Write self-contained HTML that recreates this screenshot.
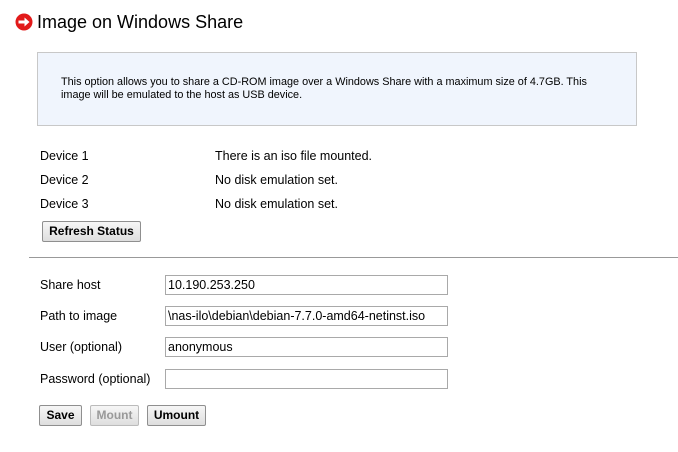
<!DOCTYPE html>
<html><head><style>
body{margin:0;width:678px;height:452px;background:#fff;font-family:"Liberation Sans",sans-serif;color:#000;position:relative;overflow:hidden}
.a{position:absolute;white-space:nowrap}
.t{font-size:12.5px;line-height:16px}
.in{position:absolute;left:165px;height:18px;border:1px solid #a9a9a9;background:#fff;font-size:12.5px;line-height:18px;padding-left:2px;width:279px}
.b{position:absolute;height:19px;border:1px solid #8f8f8f;background:linear-gradient(#f6f6f6,#dedede);font-size:12px;font-weight:bold;line-height:19px;text-align:center;border-radius:2px}
</style></head><body>
<svg class="a" style="left:15px;top:13px" width="18" height="18" viewBox="0 0 18 18"><circle cx="9" cy="9" r="8.5" fill="#e21a1a"/><path d="M3.5 7.5h6V4.5l5 4.5-5 4.5v-3h-6z" fill="#fff"/></svg>
<div class="a" style="left:37px;top:11px;font-size:18px;line-height:22px">Image on Windows Share</div>
<div class="a" style="left:37px;top:52px;width:598px;height:72px;background:#f0f5fd;border:1px solid #c8c8c8"></div>
<div class="a" style="left:61px;top:76px;font-size:10.85px;line-height:13px">This option allows you to share a CD-ROM image over a Windows Share with a maximum size of 4.7GB. This<br>image will be emulated to the host as USB device.</div>
<div class="a t" style="left:40px;top:148px">Device 1</div><div class="a t" style="left:215px;top:148px">There is an iso file mounted.</div>
<div class="a t" style="left:40px;top:172px">Device 2</div><div class="a t" style="left:215px;top:172px">No disk emulation set.</div>
<div class="a t" style="left:40px;top:196px">Device 3</div><div class="a t" style="left:215px;top:196px">No disk emulation set.</div>
<div class="b" style="left:42px;top:221px;width:97px">Refresh Status</div>
<div class="a" style="left:29px;top:257px;width:649px;height:1px;background:#999"></div>
<div class="a t" style="left:40px;top:277px">Share host</div><div class="in" style="top:275px">10.190.253.250</div>
<div class="a t" style="left:40px;top:308px">Path to image</div><div class="in" style="top:306px">\nas-ilo\debian\debian-7.7.0-amd64-netinst.iso</div>
<div class="a t" style="left:40px;top:339px">User (optional)</div><div class="in" style="top:337px">anonymous</div>
<div class="a t" style="left:40px;top:371px">Password (optional)</div><div class="in" style="top:369px"></div>
<div class="b" style="left:39px;top:405px;width:41px">Save</div>
<div class="b" style="left:90px;top:405px;width:47px;color:#999;border-color:#bbb">Mount</div>
<div class="b" style="left:147px;top:405px;width:57px">Umount</div>
</body></html>
